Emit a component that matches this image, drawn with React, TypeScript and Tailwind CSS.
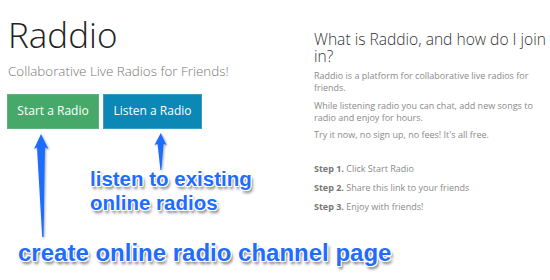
import React from "react";

const annot =
  "[text-shadow:1px_0_0_#fff,-1px_0_0_#fff,0_1px_0_#fff,0_-1px_0_#fff,1px_1px_0_#fff,-1px_-1px_0_#fff,1px_-1px_0_#fff,-1px_1px_0_#fff,2px_3px_3px_rgba(0,0,0,0.55)]";

export default function App() {
  return (
    <div className="relative w-[550px] h-[280px] bg-white overflow-hidden font-['Open_Sans',sans-serif]">
      <div className="flex">
        <div className="w-[314px] pl-[8px]">
          <h1 className="mt-[16.2px] text-[35px] leading-[1.1] font-light text-[#222]">Raddio</h1>
          <p className="mt-[6.8px] text-[13.4px] leading-[20px] font-light text-[#777]">
            Collaborative Live Radios for Friends!
          </p>
          <div className="mt-[12.5px] flex gap-[4px] -ml-[1px]">
            <div className="w-[92px] h-[35px] flex items-center justify-center bg-[#46a96a] border border-[#5db57d] text-white text-[12px]">
              Start a Radio
            </div>
            <div className="w-[99px] h-[35px] flex items-center justify-center bg-[#0b88b6] border border-[#3a9dc4] text-white text-[12px]">
              Listen a Radio
            </div>
          </div>
        </div>
        <div className="flex-1 pr-[2px]">
          <h3 className="mt-[30.8px] text-[15.6px] leading-[17px] font-light text-[#333]">
            What is Raddio, and how do I join in?
          </h3>
          <p className="mt-[5.2px] text-[9px] leading-[12px] text-[#8a8a8a]">
            Raddio is a platform for collaborative live radios for friends.
          </p>
          <p className="mt-[6.5px] text-[9px] leading-[12px] text-[#8a8a8a]">
            While listening radio you can chat, add new songs to radio and enjoy for hours.
          </p>
          <p className="mt-[5px] text-[9px] leading-[12px] text-[#8a8a8a]">
            Try it now, no sign up, no fees! It's all free.
          </p>
          <div className="mt-[18px] text-[9px] leading-[19px] text-[#8a8a8a]">
            <div><b className="text-[#777]">Step 1.</b> Click Start Radio</div>
            <div><b className="text-[#777]">Step 2.</b> Share this link to your friends</div>
            <div><b className="text-[#777]">Step 3.</b> Enjoy with friends!</div>
          </div>
        </div>
      </div>

      <svg className="absolute left-0 top-0" width="550" height="280" viewBox="0 0 550 280">
        <defs>
          <filter id="sh" x="-50%" y="-50%" width="200%" height="200%">
            <feDropShadow dx="1" dy="1" stdDeviation="0.8" floodColor="#000" floodOpacity="0.35" />
          </filter>
        </defs>
        <polygon
          points="41,134 48.5,149 45,147.5 43.6,237 42.2,237 37,147.5 34,149"
          fill="#1f6cff"
          filter="url(#sh)"
        />
        <polygon
          points="160.8,133 166.5,145 163.6,144 161.4,170 160.4,170 157.6,144 154.5,145"
          fill="#1f6cff"
          filter="url(#sh)"
        />
      </svg>

      <div
        className={`absolute left-[90px] top-[167px] text-[20.5px] leading-[23.5px] font-bold text-[#1f6cff] font-['Liberation_Sans',Arial,sans-serif] ${annot}`}
      >
        listen to existing
        <br />
        online radios
      </div>
      <div
        className={`absolute left-[18px] top-[238.7px] text-[24px] leading-[28px] font-bold text-[#1f6cff] whitespace-nowrap font-['Liberation_Sans',Arial,sans-serif] ${annot}`}
      >
        create online radio channel page
      </div>
    </div>
  );
}
